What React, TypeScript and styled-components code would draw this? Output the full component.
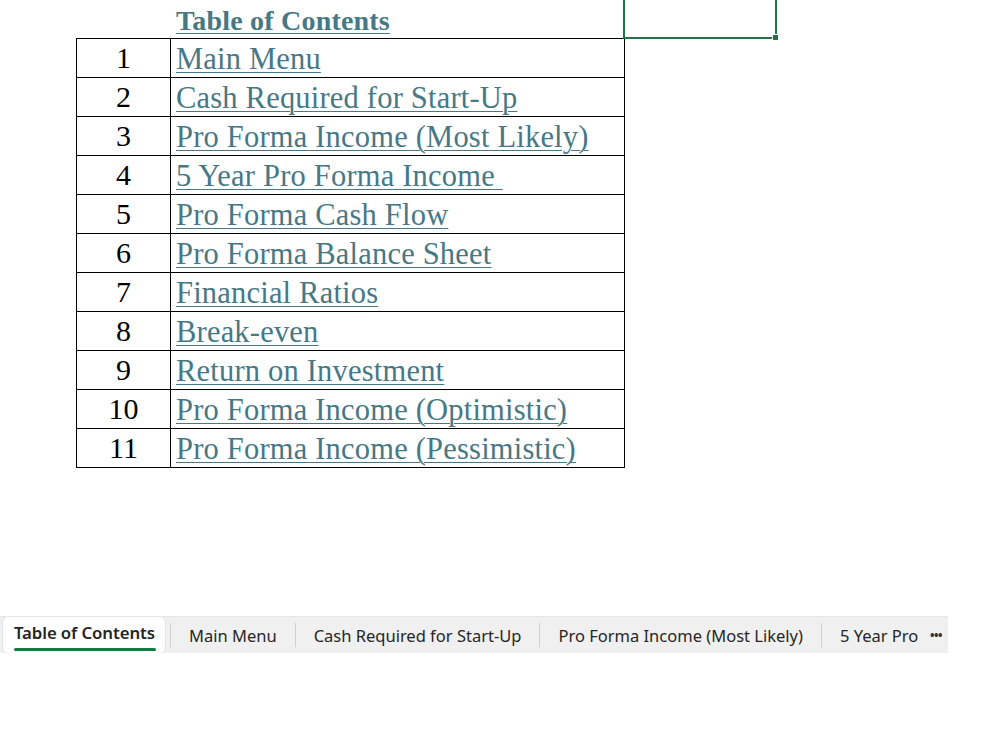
import React from "react";
import styled, { createGlobalStyle } from "styled-components";

const Global = createGlobalStyle`
  html, body { margin: 0; padding: 0; background: #fff; }
  body { font-family: "Liberation Serif", serif; }
`;

const Page = styled.div`
  width: 1000px;
  height: 750px;
  display: flex;
  flex-direction: column;
  background: #fff;
`;

const Sheet = styled.div`
  height: 616px;
  padding-left: 76px;
  box-sizing: border-box;
`;

const TitleRow = styled.div`
  display: flex;
  height: 38px;
`;

const Spacer = styled.div`
  width: 95px;
`;

const TitleCell = styled.div`
  width: 453px;
  padding-left: 5px;
  box-sizing: border-box;
  display: flex;
  align-items: flex-end;
  padding-bottom: 3px;
`;

const LinkText = styled.a<{ $bold?: boolean; $size: number }>`
  color: #467886;
  font-family: "Liberation Serif", serif;
  font-size: ${(p) => p.$size}px;
  font-weight: ${(p) => (p.$bold ? 700 : 400)};
  text-decoration: underline;
  text-decoration-thickness: 1px;
  text-underline-offset: 3px;
  white-space: pre;
  line-height: 1;
  letter-spacing: 0.2px;
`;

const SelectedCell = styled.div`
  position: relative;
  width: 154px;
  height: 39px;
  margin-left: -1px;
  border: 2px solid #217346;
  border-top: none;
  box-sizing: border-box;
`;

const Handle = styled.div`
  position: absolute;
  right: -4px;
  bottom: -4px;
  width: 5px;
  height: 5px;
  background: #217346;
  border: 1px solid #fff;
`;

const Table = styled.table`
  border-collapse: collapse;
  width: 549px;
`;

const Row = styled.tr`
  height: 39px;
`;

const NumCell = styled.td`
  width: 93px;
  border: 1px solid #000;
  text-align: center;
  font-family: "Liberation Serif", serif;
  font-size: 30px;
  color: #000;
  padding: 0;
  height: 38px;
  line-height: 38px;
`;

const NameCell = styled.td`
  border: 1px solid #000;
  padding: 3px 0 0 5px;
  height: 38px;
  box-sizing: border-box;
  vertical-align: middle;
`;

const TabBar = styled.div`
  width: 948px;
  height: 37px;
  background: #f0f0f0;
  border-top: 1px solid #e6e6e6;
  box-sizing: border-box;
  display: flex;
  align-items: center;
  overflow: hidden;
  font-family: "Noto Sans", "Open Sans", sans-serif;
`;

const ActiveTab = styled.div`
  margin-left: 3px;
  margin-right: 5px;
  width: 162px;
  height: 36px;
  margin-top: -1px;
  padding: 0 0 0 11px;
  background: #fff;
  border-radius: 5px;
  box-shadow: 0 0 0 1px #e3e3e3;
  display: flex;
  align-items: center;
  box-sizing: border-box;
  flex: none;
`;

const ActiveLabel = styled.span`
  font-size: 16.8px;
  font-weight: 600;
  color: #242424;
  position: relative;
  padding-bottom: 4px;
  letter-spacing: -0.1px;
  &::after {
    content: "";
    position: absolute;
    left: 0;
    right: -1px;
    bottom: -3px;
    height: 3px;
    border-radius: 2px;
    background: #107c41;
  }
`;

const Sep = styled.div`
  width: 1px;
  height: 24px;
  background: #d0d0d0;
  flex: none;
`;

const Tab = styled.div<{ $clip?: number }>`
  padding: 1px 18px 0;
  font-size: 16.5px;
  color: #262626;
  white-space: nowrap;
  flex: none;
  ${(p) => (p.$clip ? `width: ${p.$clip}px; overflow: hidden; padding-right: 0;` : "")}
`;

const More = styled.div`
  margin-left: 12px;
  font-size: 12px;
  font-weight: 700;
  color: #333;
  letter-spacing: -0.5px;
  flex: none;
`;

const items = [
  "Main Menu",
  "Cash Required for Start-Up",
  "Pro Forma Income (Most Likely)",
  "5 Year Pro Forma Income ",
  "Pro Forma Cash Flow",
  "Pro Forma Balance Sheet",
  "Financial Ratios",
  "Break-even",
  "Return on Investment",
  "Pro Forma Income (Optimistic)",
  "Pro Forma Income (Pessimistic)",
];

export default function App() {
  return (
    <Page>
      <Global />
      <Sheet>
        <TitleRow>
          <Spacer />
          <TitleCell>
            <LinkText $bold $size={28}>Table of Contents</LinkText>
          </TitleCell>
          <SelectedCell>
            <Handle />
          </SelectedCell>
        </TitleRow>
        <Table>
          <tbody>
            {items.map((t, i) => (
              <Row key={i}>
                <NumCell>{i + 1}</NumCell>
                <NameCell>
                  <LinkText $size={30.5}>{t}</LinkText>
                </NameCell>
              </Row>
            ))}
          </tbody>
        </Table>
      </Sheet>
      <TabBar>
        <ActiveTab>
          <ActiveLabel>Table of Contents</ActiveLabel>
        </ActiveTab>
        <Sep />
        <Tab>Main Menu</Tab>
        <Sep />
        <Tab>Cash Required for Start-Up</Tab>
        <Sep />
        <Tab>Pro Forma Income (Most Likely)</Tab>
        <Sep />
        <Tab $clip={78}>5 Year Pro</Tab>
        <More>•••</More>
      </TabBar>
    </Page>
  );
}
